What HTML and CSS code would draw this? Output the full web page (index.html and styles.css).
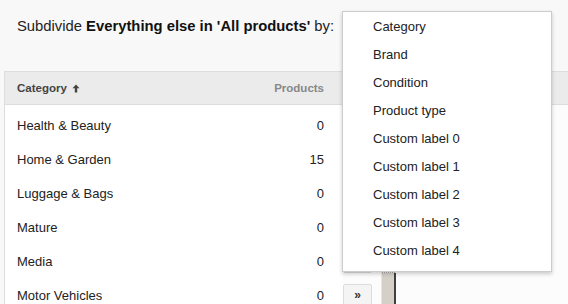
FILE: index.html
```html
<!DOCTYPE html>
<html>
<head>
    <meta charset="UTF-8">
    <link rel="stylesheet" href="styles.css">
</head>
<body>
    <h1 class="title">Subdivide <b>Everything else in 'All products'</b> by:</h1>

    <div class="panel">
        <div class="table">
            <div class="thead">
                <span class="th-cat">Category
                    <svg class="sort" width="8" height="9" viewBox="0 0 8 9"><path d="M4 0.5 L7.5 4.2 H5.2 V8.5 H2.8 V4.2 H0.5 Z" fill="#444"/></svg>
                </span>
                <span class="th-num">Products</span>
            </div>
            <div class="tbody">
                <div class="row"><span>Health &amp; Beauty</span><span>0</span></div>
                <div class="row"><span>Home &amp; Garden</span><span>15</span></div>
                <div class="row"><span>Luggage &amp; Bags</span><span>0</span></div>
                <div class="row"><span>Mature</span><span>0</span></div>
                <div class="row"><span>Media</span><span>0</span></div>
                <div class="row"><span>Motor Vehicles</span><span>0</span></div>
            </div>
        </div>
        <div class="side">
            <div class="side-head"></div>
            <div class="side-body">
                <div class="btns">
                    <div class="btn">&rsaquo;</div>
                    <div class="btn">&raquo;</div>
                </div>
                <div class="thumb"></div>
            </div>
        </div>
    </div>

    <ul class="menu">
        <li>Category</li>
        <li>Brand</li>
        <li>Condition</li>
        <li>Product type</li>
        <li>Custom label 0</li>
        <li>Custom label 1</li>
        <li>Custom label 2</li>
        <li>Custom label 3</li>
        <li>Custom label 4</li>
    </ul>
</body>
</html>
```

FILE: styles.css
```css
html,
body {
    height: 100%;
}

body {
    background-color: #f8f8f8;
    margin: 0;
    padding: 0;
    color: #222;
    font-family: "Liberation Sans", Arial, sans-serif;
    overflow: hidden;
    position: relative;
}

.title {
    margin: 0;
    padding: 17px 0 0 17px;
    font-size: 14.8px;
    line-height: 18px;
    font-weight: normal;
    height: 54px;
    color: #222;
}

.title b {
    color: #111;
}

.panel {
    display: flex;
    margin-left: 4px;
    height: 233px;
    overflow: hidden;
}

.table {
    width: 338px;
    background-color: #fff;
    border-left: 1px solid #ddd;
}

.thead {
    display: flex;
    justify-content: space-between;
    align-items: center;
    height: 32px;
    background-color: #ebebeb;
    border-top: 1px solid #ddd;
    border-bottom: 1px solid #ddd;
    padding: 0 19px 0 12px;
    font-size: 11.5px;
    font-weight: bold;
}

.th-cat {
    color: #444;
    display: flex;
    align-items: center;
    gap: 5px;
}

.th-num {
    color: #888;
}

.tbody {
    padding-top: 3px;
}

.row {
    display: flex;
    justify-content: space-between;
    align-items: center;
    height: 34px;
    padding: 0 19px 0 12px;
    font-size: 13px;
}

.side {
    flex: 1;
}

.side-head {
    height: 32px;
    background-color: #ebebeb;
    border-top: 1px solid #ddd;
    border-bottom: 1px solid #ddd;
}

.side-body {
    display: flex;
    background-color: #fcfcfc;
    height: 199px;
}

.btns {
    display: flex;
    flex-direction: column;
    gap: 11px;
    padding-top: 145px;
}

.btn {
    width: 27px;
    height: 21px;
    background-color: #f4f4f4;
    border: 1px solid #ddd;
    border-radius: 2px;
    font-size: 12px;
    font-weight: bold;
    color: #333;
    text-align: center;
    line-height: 21px;
}

.thumb {
    margin: 165px 0 0 9px;
    width: 12px;
    height: 40px;
    background-color: #d4d0c8;
    border-left: 1px solid #e8e6e0;
    border-right: 2px solid #404040;
    border-top: 3px solid #bbb;
    position: relative;
}

.thumb::before {
    content: "";
    position: absolute;
    left: -1px;
    right: -2px;
    top: -3px;
    height: 3px;
    background: repeating-conic-gradient(#a8a8a8 0 25%, #f0f0f0 0 50%) 0 0 / 2px 2px;
}

.menu {
    position: absolute;
    left: 342px;
    top: 11px;
    width: 208px;
    margin: 0;
    padding: 1px 0 6px 0;
    list-style-type: none;
    background-color: #fff;
    border: 1px solid #ccc;
    box-shadow: 0 2px 4px rgba(0, 0, 0, 0.2);
    font-size: 13px;
}

.menu li {
    height: 28px;
    line-height: 28px;
    padding-left: 30px;
    color: #222;
}
```
